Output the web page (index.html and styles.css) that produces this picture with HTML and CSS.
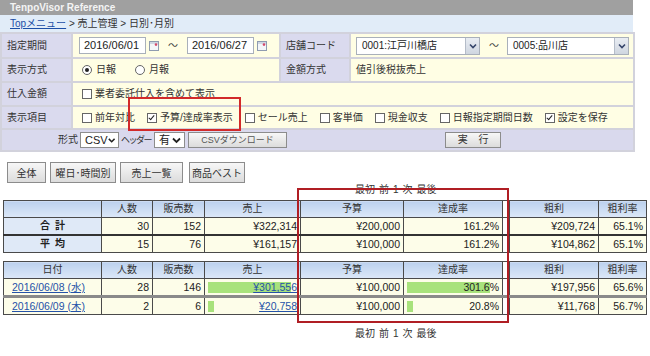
FILE: index.html
```html
<!DOCTYPE html>
<html lang="ja">
<head>
  <meta charset="UTF-8">
  <meta name="viewport" content="width=device-width, initial-scale=1.0">
  <title>TenpoVisor Reference</title>
  <link rel="stylesheet" href="styles.css">
</head>
<body>
  <div class="head">
    <div class="titlebar">TenpoVisor Reference</div>
    <div class="crumb"><a href="#">Topメニュー</a> &gt; 売上管理 &gt; 日別･月別</div>

    <!-- 検索条件 -->
    <table class="cond">
      <colgroup>
        <col class="w-lbl"><col class="w-val1"><col class="w-lbl2"><col class="w-val2">
      </colgroup>
      <tr class="r1">
        <th>指定期間</th>
        <td>
          <div class="cell">
            <span class="date">2016/06/01</span>
            <svg class="cal" width="10" height="10" viewBox="0 0 10 10"><rect x="0.5" y="0.5" width="9" height="9" fill="#f4f6f9" stroke="#8f9bb0"/><rect x="1" y="1" width="8" height="2" fill="#cfd7e3"/><circle cx="7" cy="3.6" r="1.3" fill="#d4486a"/></svg>
            <span class="tilde">～</span>
            <span class="date">2016/06/27</span>
            <svg class="cal" width="10" height="10" viewBox="0 0 10 10"><rect x="0.5" y="0.5" width="9" height="9" fill="#f4f6f9" stroke="#8f9bb0"/><rect x="1" y="1" width="8" height="2" fill="#cfd7e3"/><circle cx="7" cy="3.6" r="1.3" fill="#d4486a"/></svg>
          </div>
        </td>
        <th>店舗コード</th>
        <td>
          <div class="cell">
            <span class="sel shop1">0001:江戸川橋店<i class="arr"><svg width="8" height="6" viewBox="0 0 8 6"><polyline points="1,1.5 4,4.5 7,1.5" fill="none" stroke="#34446a" stroke-width="1.6"/></svg></i></span>
            <span class="tilde">～</span>
            <span class="sel shop2">0005:品川店<i class="arr"><svg width="8" height="6" viewBox="0 0 8 6"><polyline points="1,1.5 4,4.5 7,1.5" fill="none" stroke="#34446a" stroke-width="1.6"/></svg></i></span>
          </div>
        </td>
      </tr>
      <tr class="r2">
        <th>表示方式</th>
        <td>
          <div class="cell">
            <span class="radio on"></span><span class="opt">日報</span>
            <span class="radio"></span><span class="opt">月報</span>
          </div>
        </td>
        <th>金額方式</th>
        <td><div class="cell">値引後税抜売上</div></td>
      </tr>
      <tr class="r3">
        <th>仕入金額</th>
        <td colspan="3">
          <div class="cell"><span class="chk"></span>業者委託仕入を含めて表示</div>
        </td>
      </tr>
      <tr class="r4">
        <th>表示項目</th>
        <td colspan="3">
          <div class="cell items">
            <label><span class="chk"></span>前年対比</label>
            <label><span class="chk on"></span>予算/達成率表示</label>
            <label><span class="chk"></span>セール売上</label>
            <label><span class="chk"></span>客単価</label>
            <label><span class="chk"></span>現金収支</label>
            <label><span class="chk"></span>日報指定期間日数</label>
            <label><span class="chk on"></span>設定を保存</label>
          </div>
        </td>
      </tr>
      <tr class="r5">
        <td colspan="4">
          <div class="cell export">
            <span>形式</span>
            <span class="mini csv">CSV<svg width="9" height="7" viewBox="0 0 9 7"><polyline points="1,1.5 4.5,5 8,1.5" fill="none" stroke="#222" stroke-width="1.8"/></svg></span>
            <span class="hdr-lbl">ヘッダー</span>
            <span class="mini hdr">有<svg width="9" height="7" viewBox="0 0 9 7"><polyline points="1,1.5 4.5,5 8,1.5" fill="none" stroke="#222" stroke-width="1.8"/></svg></span>
            <span class="btn dl">CSVダウンロード</span>
            <span class="btn run">実 行</span>
          </div>
        </td>
      </tr>
    </table>
  </div>

  <div class="tabs">
    <span class="btn tab t-all">全体</span>
    <span class="btn tab t-week">曜日･時間別</span>
    <span class="btn tab t-list">売上一覧</span>
    <span class="btn tab t-best">商品ベスト</span>
  </div>

  <div class="pager"><span>最初</span><span>前</span><span>1</span><span>次</span><span>最後</span></div>

  <!-- 合計・平均 -->
  <table class="rep">
    <colgroup>
      <col class="c1"><col class="c2"><col class="c3"><col class="c4"><col class="c5"><col class="c6"><col class="c7"><col class="c8"><col class="c9">
    </colgroup>
    <tr class="hd">
      <th></th><th>人数</th><th>販売数</th><th>売上</th><th>予算</th><th>達成率</th><td class="gap"></td><th>粗利</th><th>粗利率</th>
    </tr>
    <tr>
      <th class="sum">合計</th><td>30</td><td>152</td><td>¥322,314</td><td>¥200,000</td><td>161.2%</td><td class="gap"></td><td>¥209,724</td><td>65.1%</td>
    </tr>
    <tr class="sep">
      <th class="sum">平均</th><td>15</td><td>76</td><td>¥161,157</td><td>¥100,000</td><td>161.2%</td><td class="gap"></td><td>¥104,862</td><td>65.1%</td>
    </tr>
  </table>

  <!-- 日別 -->
  <table class="rep detail">
    <colgroup>
      <col class="c1"><col class="c2"><col class="c3"><col class="c4"><col class="c5"><col class="c6"><col class="c7"><col class="c8"><col class="c9">
    </colgroup>
    <tr class="hd">
      <th>日付</th><th>人数</th><th>販売数</th><th>売上</th><th>予算</th><th>達成率</th><td class="gap"></td><th>粗利</th><th>粗利率</th>
    </tr>
    <tr>
      <td class="day"><a href="#">2016/06/08 (水)</a></td><td>28</td><td>146</td>
      <td class="barcell"><span class="bar" style="width: 83px"></span><a href="#">¥301,556</a></td>
      <td>¥100,000</td>
      <td class="barcell"><span class="bar" style="width: 83px"></span><span>301.6%</span></td>
      <td class="gap"></td><td>¥197,956</td><td>65.6%</td>
    </tr>
    <tr class="sep">
      <td class="day"><a href="#">2016/06/09 (木)</a></td><td>2</td><td>6</td>
      <td class="barcell"><span class="bar" style="width: 6px"></span><a href="#">¥20,758</a></td>
      <td>¥100,000</td>
      <td class="barcell"><span class="bar" style="width: 6px"></span><span>20.8%</span></td>
      <td class="gap"></td><td>¥11,768</td><td>56.7%</td>
    </tr>
  </table>

  <div class="pager bottom"><span>最初</span><span>前</span><span>1</span><span>次</span><span>最後</span></div>

  <!-- 注記の赤枠 -->
  <div class="mark mark-a"></div>
  <div class="mark mark-b"></div>
</body>
</html>
```

FILE: styles.css
```css
body {
  margin: 0;
  font-family: "Liberation Sans", "Noto Sans CJK JP", sans-serif;
  font-size: 10px;
  color: #333;
  background: #fff;
  position: relative;
}
.head {
  width: 633px;
}
.titlebar {
  height: 15px;
  line-height: 15px;
  background: #a0a0a0;
  color: #f4f4f4;
  font-weight: bold;
  padding-left: 10px;
}
.crumb {
  height: 17px;
  line-height: 17px;
  background: #e1ecf8;
  padding-left: 10px;
}
.crumb a {
  color: #1c4ea6;
}

/* search form */
.cond {
  width: 633px;
  border-collapse: collapse;
  table-layout: fixed;
  border-right: 2px solid #a9b1c0;
  border-bottom: 2px solid #a4b0c6;
}
.w-lbl { width: 71px; }
.w-val1 { width: 208px; }
.w-lbl2 { width: 70px; }
.w-val2 { width: 284px; }
.cond th,
.cond td {
  border: 2px solid #d2d2dc;
  padding: 0 0 0 5px;
  font-weight: normal;
  text-align: left;
  line-height: 14px;
}
.cond th {
  background: #dadaee;
}
.cond td {
  background: #fffee4;
}
.cond .r1 th, .cond .r1 td { height: 23px; }
.cond .r2 th, .cond .r2 td { height: 22px; }
.cond .r3 th, .cond .r3 td { height: 22px; }
.cond .r4 th, .cond .r4 td { height: 21px; }
.cond .r5 td {
  height: 20px;
  background: #d9d9ed;
}
.cell {
  display: flex;
  align-items: center;
}
.date {
  width: 61px;
  height: 15px;
  line-height: 15px;
  margin-left: 1px;
  padding-left: 4px;
  background: #fff;
  border: 1px solid #a9b0ba;
  font-size: 11px;
  color: #222;
}
.cal {
  margin-left: 3px;
}
.tilde {
  margin: 0 8px 0 9px;
  color: #444;
}
.sel {
  position: relative;
  height: 16px;
  line-height: 16px;
  padding-left: 5px;
  background: #fff;
  border: 1px solid #a9b0ba;
  color: #222;
}
.shop1 { width: 117px; }
.shop2 { width: 115px; }
.arr {
  position: absolute;
  right: 0;
  top: 0;
  width: 13px;
  height: 16px;
  display: flex;
  align-items: center;
  justify-content: center;
  background: linear-gradient(#e9edf3, #cfd6e0);
  border-left: 1px solid #b4bcc8;
}
.radio {
  width: 8px;
  height: 8px;
  border: 1px solid #666;
  border-radius: 50%;
  background: #fff;
  margin: 0 4px 0 4px;
  position: relative;
}
.radio.on::after {
  content: "";
  position: absolute;
  left: 2px;
  top: 2px;
  width: 4px;
  height: 4px;
  border-radius: 50%;
  background: #222;
}
.opt {
  margin-right: 15px;
}
.chk {
  display: inline-block;
  width: 8px;
  height: 8px;
  border: 1px solid #666;
  background: #fff;
  margin: 0 3px 0 4px;
  position: relative;
}
.chk.on::after {
  content: "";
  position: absolute;
  left: 2px;
  top: 0;
  width: 2px;
  height: 5px;
  border: solid #222;
  border-width: 0 1.5px 1.5px 0;
  transform: rotate(40deg);
}
.items label {
  display: flex;
  align-items: center;
  margin-right: 8px;
}
.export {
  padding-left: 51px;
}
.mini {
  display: flex;
  align-items: center;
  justify-content: space-between;
  height: 14px;
  padding: 0 3px 0 4px;
  margin: 0 2px;
  background: #fff;
  border: 1px solid #8d8d8d;
  font-size: 11px;
  color: #222;
}
.csv { width: 30px; }
.hdr { width: 22px; margin-left: 3px; }
.hdr-lbl {
  font-size: 9px;
  letter-spacing: -1.5px;
}
.btn {
  display: inline-flex;
  align-items: center;
  justify-content: center;
  background: linear-gradient(#f7f7f7, #dcdcdc);
  border: 1px solid #8c8c8c;
  color: #333;
}
.dl {
  width: 97px;
  height: 14px;
  margin-left: 1px;
  color: #555;
  font-size: 9px;
}
.run {
  height: 16px;
  margin-left: 158px;
  letter-spacing: 4px;
  padding-left: 4px;
  box-sizing: border-box;
  width: 56px;
}

/* tab buttons */
.tabs {
  display: flex;
  gap: 4px;
  margin: 10px 0 0 7px;
}
.tab {
  box-sizing: border-box;
  height: 21px;
}
.t-all { width: 39px; }
.t-week { width: 66px; }
.t-list { width: 63px; margin-right: 2px; }
.t-best { width: 56px; }

.pager {
  padding-left: 355px;
  height: 17px;
  line-height: 14px;
  color: #333;
}
.pager span {
  margin-right: 4px;
}
.pager.bottom {
  margin-top: 12px;
}

/* report tables */
.rep {
  margin-left: 3px;
  width: 643px;
  border-collapse: collapse;
  table-layout: fixed;
  border: 1px solid #111;
  margin-bottom: 8px;
}
.c1 { width: 98px; }
.c2 { width: 51px; }
.c3 { width: 52px; }
.c4 { width: 96px; }
.c5 { width: 103px; }
.c6 { width: 99px; }
.c7 { width: 7px; }
.c8 { width: 89px; }
.c9 { width: 48px; }
.rep th,
.rep td {
  border: 1px solid #4a4a4a;
  height: 16px;
  padding: 0 3px;
  line-height: 14px;
}
.rep th {
  font-weight: normal;
  color: #333;
  background: linear-gradient(#bcd1ee, #dce8f8);
}
.rep td {
  text-align: right;
  background: #fdfde9;
  font-size: 10.5px;
  color: #222;
}
.rep th.sum {
  background: #dfe9f7;
  font-weight: bold;
  letter-spacing: 5px;
  padding-left: 8px;
  color: #222;
}
.rep .sep th,
.rep .sep td {
  border-top: 2px solid #333;
}
.rep td.gap {
  background: #fff;
  border-left: 1px solid #4a4a4a;
  padding: 0;
}
.detail .sep th,
.detail .sep td {
  border-top: 3px solid #8a8a8a;
}
.detail td.day {
  text-align: left;
  padding-left: 8px;
}
.rep a {
  color: #2552a8;
}
.barcell {
  position: relative;
}
.bar {
  position: absolute;
  left: 3px;
  top: 3px;
  height: 11px;
  background: #a8e27c;
}
.barcell a,
.barcell span + span {
  position: relative;
}

/* red annotation frames */
.mark {
  position: absolute;
  border: 2px solid #d22a2a;
  box-sizing: border-box;
}
.mark-a {
  left: 128px;
  top: 97px;
  width: 113px;
  height: 34px;
}
.mark-b {
  left: 297px;
  top: 188px;
  width: 212px;
  height: 135px;
  border-color: #b01e24;
}
```
